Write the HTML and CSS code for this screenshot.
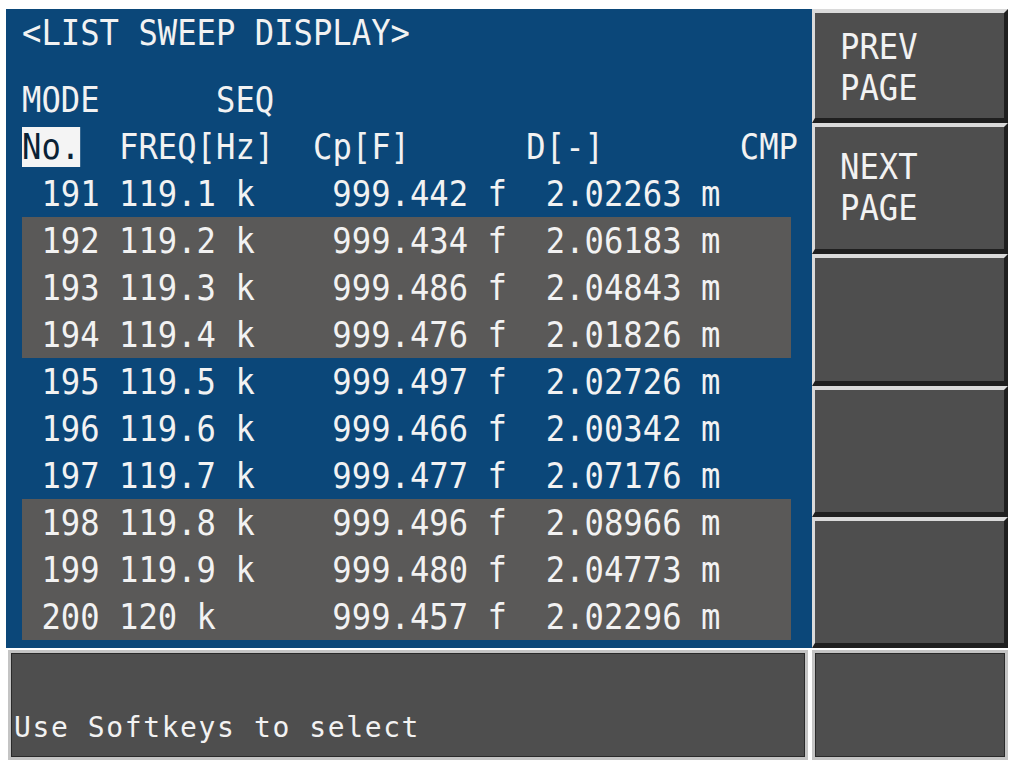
FILE: index.html
```html
<!DOCTYPE html>
<html lang="en">
<head>
  <meta charset="UTF-8">
  <meta name="viewport" content="width=device-width, initial-scale=1.0">
  <title>List Sweep Display</title>
  <link rel="stylesheet" href="styles.css">
</head>
<body>
  <div class="screen">
    <div class="main">
      <div class="display">
        <div class="line title"><span class="t">&lt;LIST SWEEP DISPLAY&gt;</span></div>
        <div class="line"><span class="t">MODE      SEQ</span></div>
        <div class="line"><span class="t"><span class="cursor">No.</span>  FREQ[Hz]  Cp[F]      D[-]       CMP</span></div>
        <div class="line"><span class="t"> 191 119.1 k    999.442 f  2.02263 m</span></div>
        <div class="band">
          <div class="line"><span class="t"> 192 119.2 k    999.434 f  2.06183 m</span></div>
          <div class="line"><span class="t"> 193 119.3 k    999.486 f  2.04843 m</span></div>
          <div class="line"><span class="t"> 194 119.4 k    999.476 f  2.01826 m</span></div>
        </div>
        <div class="line"><span class="t"> 195 119.5 k    999.497 f  2.02726 m</span></div>
        <div class="line"><span class="t"> 196 119.6 k    999.466 f  2.00342 m</span></div>
        <div class="line"><span class="t"> 197 119.7 k    999.477 f  2.07176 m</span></div>
        <div class="band">
          <div class="line"><span class="t"> 198 119.8 k    999.496 f  2.08966 m</span></div>
          <div class="line"><span class="t"> 199 119.9 k    999.480 f  2.04773 m</span></div>
          <div class="line"><span class="t"> 200 120 k      999.457 f  2.02296 m</span></div>
        </div>
      </div>

      <div class="softkeys">
        <div class="softkey"><span class="t">PREV<br>PAGE</span></div>
        <div class="softkey"><span class="t">NEXT<br>PAGE</span></div>
        <div class="softkey"></div>
        <div class="softkey"></div>
        <div class="softkey"></div>
      </div>
    </div>

    <div class="footer">
      <div class="message">Use Softkeys to select</div>
      <div class="footkey"></div>
    </div>
  </div>
</body>
</html>
```

FILE: styles.css
```css
:root {
  --screen-blue: #0b4779;
  --band-gray: #5a5958;
  --key-gray: #4e4e4e;
  --bevel-light: #dadada;
  --bevel-dark: #1f1f1f;
  --text: #f2f2f2;
}

body {
  margin: 0;
  padding: 0;
  background-color: #fff;
  font-family: 'DejaVu Sans Mono', 'Liberation Mono', monospace;
  color: var(--text);
}

.screen {
  width: 1002px;
  padding: 9px 0 0 6px;
}

.main {
  display: grid;
  grid-template-columns: 806px 196px;
  height: 639px;
}

/* measurement area */
.display {
  background-color: var(--screen-blue);
  padding: 0 21px 0 16px;
}

.line {
  height: 47px;
  line-height: 47px;
  font-size: 36px;
  white-space: pre;
}

/* narrow the glyphs to the instrument's character grid */
.t {
  display: inline-block;
  transform: scaleX(0.895);
  transform-origin: 0 50%;
}

.title {
  margin-bottom: 20px;
}

.cursor {
  display: inline-block;
  height: 40px;
  line-height: 40px;
  background-color: #f4f4f4;
  color: #0a2236;
}

.band {
  background-color: var(--band-gray);
}

/* softkeys */
.softkeys {
  display: flex;
  flex-direction: column;
}

.softkey {
  flex: 1;
  background-color: var(--key-gray);
  border-top: 4px solid var(--bevel-light);
  border-left: 3px solid var(--bevel-light);
  border-right: 4px solid var(--bevel-dark);
  border-bottom: 5px solid var(--bevel-dark);
  padding: 19px 0 0 25px;
  font-size: 36px;
  line-height: 41px;
}

.softkey:first-child {
  flex: none;
  height: 114px;
  box-sizing: border-box;
  padding-top: 13px;
}

/* message line */
.footer {
  display: grid;
  grid-template-columns: 800px 196px;
  column-gap: 4px;
  height: 110px;
  margin-top: 2px;
  padding-left: 2px;
}

.message,
.footkey {
  background-color: var(--key-gray);
  border: 3px solid #c4c4c4;
  box-shadow: inset 0 0 0 1px #2a2a2a;
}

.message {
  display: flex;
  align-items: flex-end;
  padding: 0 0 14px 3px;
  font-size: 28px;
  line-height: 30px;
  letter-spacing: 1.6px;
}
```
